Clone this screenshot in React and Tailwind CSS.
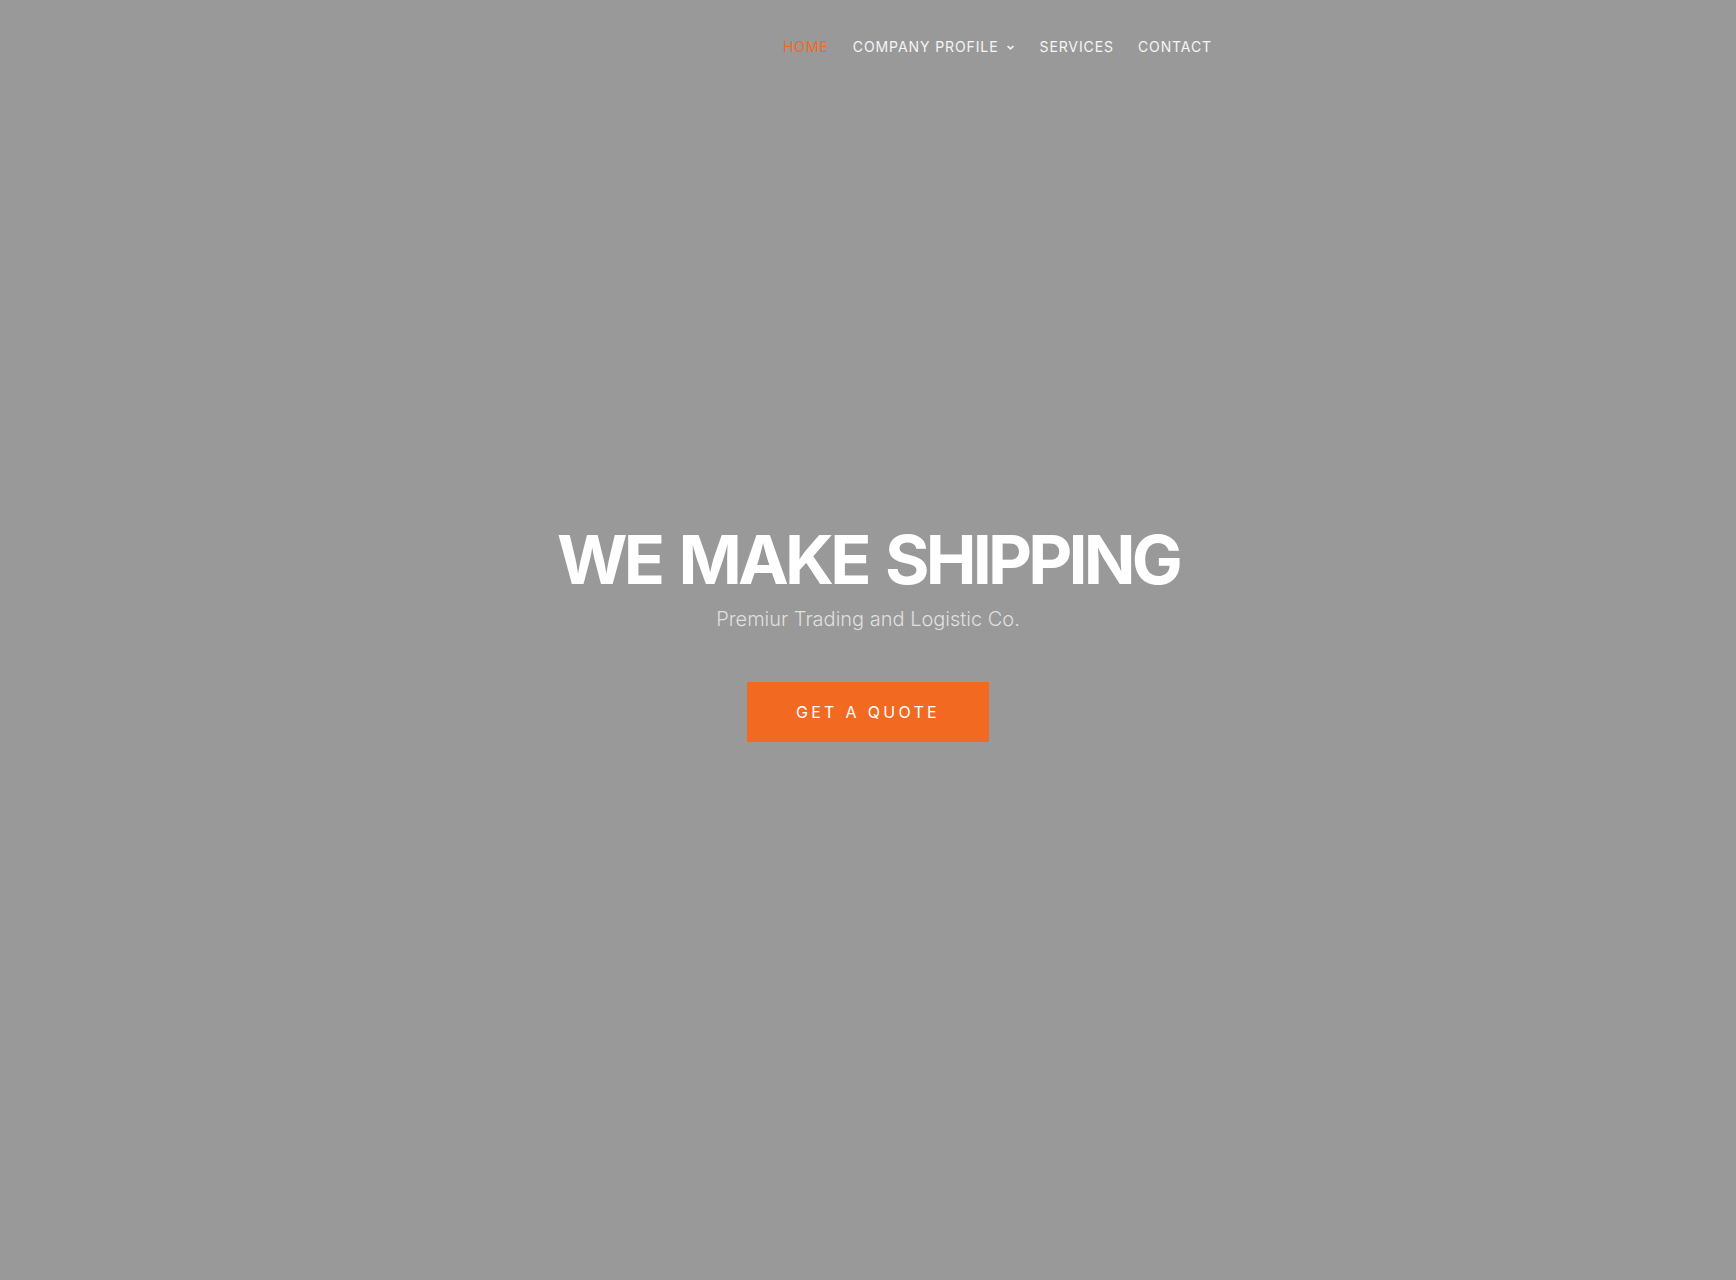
import React from "react";

const navItems = [
  { label: "HOME", active: true },
  { label: "COMPANY PROFILE", dropdown: true },
  { label: "SERVICES" },
  { label: "CONTACT" },
];

const App = () => {
  return (
    <div
      className="min-h-[1280px] w-full bg-[#999999] flex flex-col"
      style={{ fontFamily: "Inter, 'Open Sans', sans-serif" }}
    >
      {/* Header */}
      <header className="flex justify-end pr-[524px] pt-[38px]">
        <nav className="flex items-center gap-[24px]">
          {navItems.map((item) => (
            <a
              key={item.label}
              href="#"
              className={`flex items-center text-[14px] leading-[18px] tracking-[0.9px] font-normal ${
                item.active ? "text-[#f26a21]" : "text-white/90"
              }`}
            >
              {item.label}
              {item.dropdown && (
                <svg
                  className="ml-[6px]"
                  width="11"
                  height="11"
                  viewBox="0 0 10 10"
                  fill="none"
                  stroke="currentColor"
                  strokeWidth="1.5"
                >
                  <path d="M2.3 3.6 L5 6.3 L7.7 3.6" />
                </svg>
              )}
            </a>
          ))}
        </nav>
      </header>

      {/* Hero */}
      <main className="flex flex-col items-center pt-[463px]">
        <h1 className="text-white font-bold text-[68px] leading-[80px] tracking-[-3.8px] [word-spacing:5px]">
          WE MAKE SHIPPING
        </h1>
        <p className="mt-[6px] text-white/70 font-light text-[20px] leading-[28px]">
          Premiur Trading and Logistic Co.
        </p>
        <a
          href="#"
          className="mt-[49px] flex items-center justify-center w-[242px] h-[60px] bg-[#f26a21] text-white text-[16px] tracking-[3.3px] font-normal"
        >
          GET A QUOTE
        </a>
      </main>
    </div>
  );
};

export default App;
